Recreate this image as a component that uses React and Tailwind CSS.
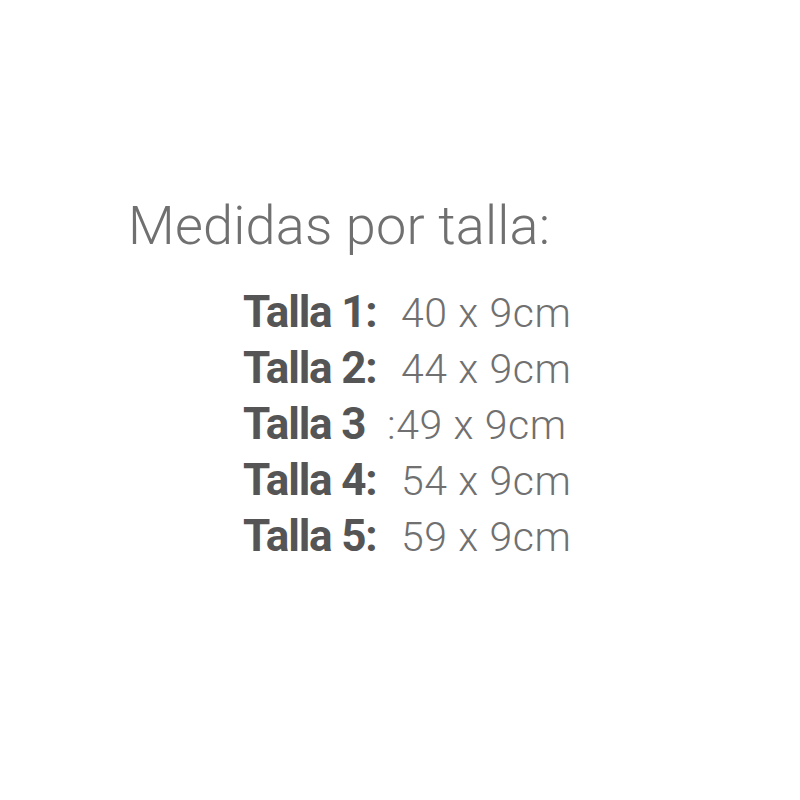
import React from 'react';

const sizes = [
  { label: 'Talla 1:', value: '40 x 9cm' },
  { label: 'Talla 2:', value: '44 x 9cm' },
  { label: 'Talla 3', value: ':49 x 9cm', shift: true },
  { label: 'Talla 4:', value: '54 x 9cm' },
  { label: 'Talla 5:', value: '59 x 9cm' },
];

export default function App() {
  return (
    <div className="w-[800px] h-[800px] bg-white font-['Roboto',sans-serif]">
      <div className="pt-[194px] pl-[128px]">
        <h2 className="text-[54px] font-light leading-[64px] tracking-[0.2px] text-[#707070]">Medidas por talla:</h2>
        <div className="mt-[26px] pl-[115px] flex flex-col">
          {sizes.map((s) => (
            <div key={s.label} className="flex items-baseline h-[56px] leading-[56px]">
              <span className="w-[158px] shrink-0 text-[44px] tracking-[-1.2px] font-bold text-[#555555]">{s.label}</span>
              <span className={`text-[41px] font-light tracking-[0.6px] text-[#707070] ${s.shift ? 'ml-[-14px]' : ''}`}>{s.value}</span>
            </div>
          ))}
        </div>
      </div>
    </div>
  );
}
